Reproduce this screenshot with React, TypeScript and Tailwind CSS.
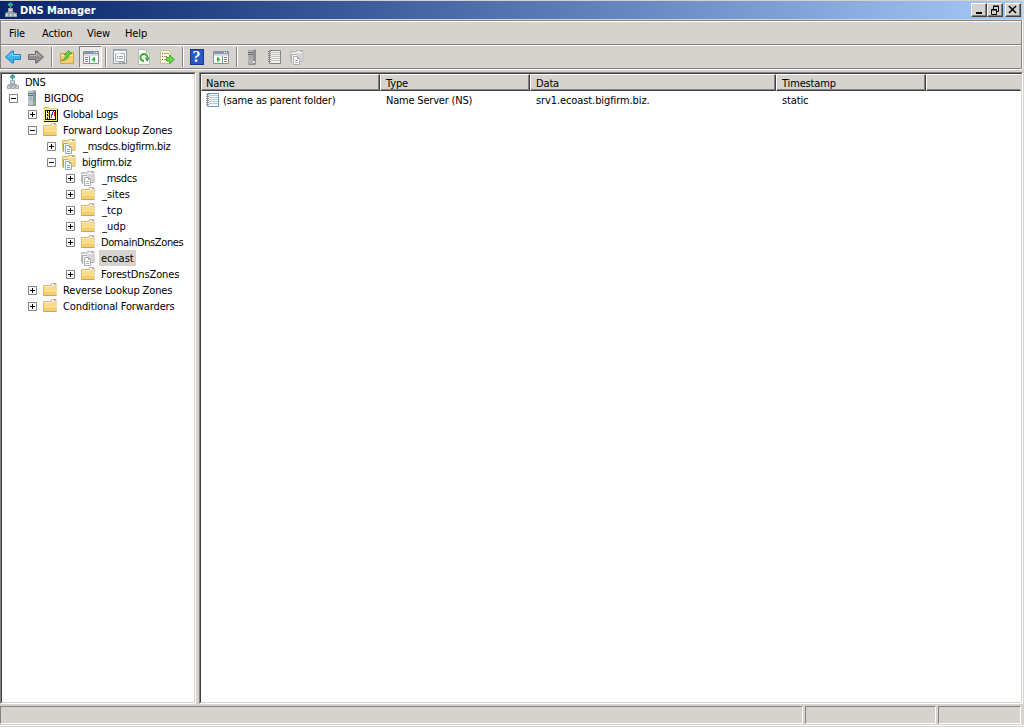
import type { ReactNode } from 'react';

type IconProps = { className?: string };

function Svg({ children, className = '' }: { children: ReactNode; className?: string }) {
  return (
    <svg viewBox="0 0 16 16" className={`size-4 shrink-0 ${className}`} fill="none">
      {children}
    </svg>
  );
}

function DnsIcon({ className }: IconProps) {
  return (
    <Svg className={className}>
      <path d="M8.500 5v6M4.500 12v-1.500h8V12" stroke="#9aa3a8" />
      <path d="M8.500 0l3 2.500-3 3-3-3z" fill="#2a86c4" />
      <path d="M6 2.500L8.500.5V3L7 4zM9 4.500L11 3 9.500 2z" fill="#4fc35a" />
      <path d="M6.500 6.500h4v3h-4z" fill="#f0f2f3" stroke="#9fa7ad" />
      <path d="M3.500 11.500h3v3h-3zM7.500 11.500h3v3h-3zM11.500 11.500h3v3h-3z" fill="#e8eaec" stroke="#9fa7ad" />
      <path d="M7 8h3M4 13h2M8 13h2M12 13h2" stroke="#aab2b8" />
    </Svg>
  );
}

function ServerIcon({ gray }: { gray?: boolean }) {
  return (
    <Svg>
      <path d="M5 1l1-1h6l1 1v14l-1 1H6l-1-1z" fill={gray ? '#8f8f8f' : '#8896a0'} />
      <path d="M5 1l1-1h6l-1 1z" fill={gray ? '#cfcfcf' : '#d5dee3'} />
      <path d="M5 1h5v14H6l-1-1z" fill={gray ? '#b2b2b2' : '#b9c6ce'} />
      <path d="M5 3h5v1H5zM5 5h5v1H5z" fill={gray ? '#6c6c6c' : '#5e7280'} />
      <path d="M6 7.500h3M6 9.500h3" stroke={gray ? '#9c9c9c' : '#98a8b2'} />
      <path d="M10 12h2v2h-2z" fill={gray ? '#e0e0e0' : '#69d957'} />
    </Svg>
  );
}

function LogsIcon() {
  return (
    <Svg>
      <path d="M1.500 14V2.500l1-1h4l1 1.500h7" fill="#ffef83" stroke="#c9bb55" />
      <path d="M1 3h14v12H1z" fill="#fff07c" />
      <path d="M15.500 3v12.500H2" stroke="#111" />
      <path d="M3 4h11v10H3z" fill="#111" />
      <path d="M4 5h9v8H4z" fill="#fff" />
      <path d="M5 5h1v2H5zM5 8h1v2H5zM5 11h1v2H5zM7 5h1v8H7z" fill="#111" />
      <path d="M6 6h1v2H6zM6 9h1v2H6z" fill="#f0d000" />
      <path d="M9 8h1v4H9zM12 6h1v4h-1z" fill="#e02020" />
      <path d="M10 6h1v3h-1zM11 5h1v1h-1z" fill="#2030d0" />
    </Svg>
  );
}

function FolderIcon() {
  return (
    <Svg>
      <path d="M1.500 3.500h7l1-2h4.500v12h-12.500z" fill="#f7d77f" stroke="#dfb864" />
      <path d="M2 5h12v8H2z" fill="#fbdc8b" />
      <path d="M2 4.500h7l1-1h4" stroke="#fff0b8" />
      <path d="M2 10h12v3H2z" fill="#f5ce72" />
      <path d="M10 2.500h2" stroke="#fff" />
      <path d="M12 2h1.500v1H12z" fill="#5da4cf" />
      <path d="M1 13.500h13.500" stroke="#cfa451" />
    </Svg>
  );
}

function ZoneIcon({ gray }: { gray?: boolean }) {
  const edge = gray ? '#bababa' : '#dfb864';
  const fill = gray ? '#d6d6d6' : '#f9d982';
  const ink = gray ? '#adadad' : '#86a9cd';
  return (
    <Svg>
      <path d="M1.500 2.500h5l1-1h6.500v11h-12.500z" fill={fill} stroke={edge} />
      <path d="M2 4.500h5l1-1h6" stroke={gray ? '#f2f2f2' : '#fff1bd'} />
      <path d="M9 2.500h2" stroke="#fff" />
      <path d="M11 2h2v1h-2z" fill={gray ? '#aaa' : '#65a9ce'} />
      <path d="M2 6h5v8H2z" fill="#eef2f5" />
      <path d="M2.500 14V5.500H7" stroke={ink} />
      <path d="M4.500 7.500h4l2 2v6h-6z" fill="#fff" stroke={ink} />
      <path d="M8 8h1v1h1v1H8z" fill={ink} />
      <path d="M6 11.500h3M6 13.500h3" stroke={ink} />
    </Svg>
  );
}

function NotebookIcon({ gray }: { gray?: boolean }) {
  return (
    <Svg>
      <path d="M2.500 1.500h11v13h-11z" fill={gray ? '#f0f0ee' : '#f3fbff'} stroke={gray ? '#858585' : '#7b96b6'} />
      <path d="M4 3.500h9M4 5.500h9M4 7.500h9M4 9.500h9M4 11.500h9" stroke={gray ? '#c2c2c2' : '#9dd5ec'} />
      <path d="M1 2.500h3M1 4.500h3M1 6.500h3M1 8.500h3M1 10.500h3M1 12.500h3" stroke={gray ? '#8a8a8a' : '#8793a2'} />
    </Svg>
  );
}

function ArrowIcon({ right }: { right?: boolean }) {
  return right ? (
    <Svg>
      <path d="M.5 5.500h7v-3.500h1.500L15.500 8 9 14H7.500v-3.500h-7z" fill="#8f8f8f" stroke="#6b6b6b" />
      <path d="M1.500 6.500h7V4l4 4" stroke="#b9b9b9" />
    </Svg>
  ) : (
    <Svg>
      <path d="M15.500 5.500h-7v-3.500H7L.5 8 7 14h1.500v-3.500h7z" fill="#38b4f4" stroke="#2a80bd" />
      <path d="M14.500 6.500h-7V4l-4 4" stroke="#8fdcfb" />
    </Svg>
  );
}

function UpFolderIcon() {
  return (
    <Svg>
      <path d="M1.500 4.500h6l1 1 2-2h4v11h-13z" fill="#f4ce70" stroke="#cfa451" />
      <path d="M2 6.500h12" stroke="#ffedb0" />
      <path d="M2 11.500c3-.5 4.500-2 5-6L5 6l4.500-4.500L13 5l-2.500-.2C10 9.500 7 11.500 2 11.500z" fill="#65cf38" stroke="#389a22" strokeWidth=".7" />
    </Svg>
  );
}

function PaneIcon({ play }: { play?: boolean }) {
  return (
    <Svg>
      <path d="M.5 2.500h15v12H.5z" fill="#fff" stroke="#8594a4" />
      <path d="M1 3h14v2H1z" fill="#8796aa" />
      <path d="M11 3.500h1M13 3.500h1" stroke="#fff" />
      <path d="M1 6h14" stroke="#d5dce4" strokeWidth="2" />
      {play ? (
        <>
          <path d="M9.500 7v7" stroke="#8796aa" />
          <path d="M11 8.500h3M11 10.500h3M11 12.500h3" stroke="#4e8dd5" />
          <path d="M4 7.500v6l3.500-3z" fill="#32b92d" />
        </>
      ) : (
        <>
          <path d="M6.500 7v7" stroke="#8796aa" />
          <path d="M2 8.500h3M2 10.500h3M2 12.500h3" stroke="#4e8dd5" />
          <path d="M12 7.500v6l-3.500-3z" fill="#32b92d" />
        </>
      )}
    </Svg>
  );
}

function PropertiesIcon() {
  return (
    <Svg>
      <path d="M1.500.5h13v14h-13z" fill="#f8f8f8" stroke="#929ba2" />
      <path d="M2 1.500h12" stroke="#aeb5bc" />
      <path d="M3.500 4.500h9v8h-9z" fill="#fff" stroke="#a3adb6" />
      <path d="M4 4.500h5" stroke="#d7dce0" />
      <path d="M5 7.500h1M5 9.500h1" stroke="#579cc9" />
      <path d="M7 7.500h4M7 9.500h4M7 13.500h2M10 13.500h3" stroke="#98a0a8" />
    </Svg>
  );
}

function RefreshIcon() {
  return (
    <Svg>
      <path d="M2.500.5h8l3 3v12h-11z" fill="#fafafa" stroke="#b8b8b8" />
      <path d="M10.500 1v3h3" stroke="#b8b8b8" />
      <path d="M8 12A3.500 3.500 0 1 1 11.500 8.500" stroke="#3fae33" strokeWidth="2" />
      <path d="M8.500 8.500h5L11.500 13z" fill="#35a52c" />
    </Svg>
  );
}

function ExportIcon() {
  return (
    <Svg>
      <path d="M1.500 1.500h8l2 2v11h-10z" fill="#fff9dd" stroke="#c4bda2" />
      <path d="M3 4.500h1M3 7.500h1M3 10.500h1" stroke="#5f5f5f" />
      <path d="M5 4.500h5M5 7.500h3M5 10.500h2" stroke="#a7997b" />
      <path d="M7.500 8.500h3V6l5 4.500-5 4.500v-3h-3z" fill="#70d34c" stroke="#45ac35" />
    </Svg>
  );
}

function HelpIcon() {
  return (
    <span className="flex h-4 w-3.5 items-center justify-center border border-[#16388b] bg-[#2858c4] font-['Liberation_Serif',serif] text-[16px] leading-none font-bold text-white">
      ?
    </span>
  );
}

function Separator() {
  return <span className="h-5 w-0.5 shrink-0 border-r border-l border-r-white border-l-[#848284]" />;
}

function ToolButton({ children, pressed }: { children: ReactNode; pressed?: boolean }) {
  return (
    <span
      className={`flex h-[22px] w-[23px] shrink-0 items-center justify-center ${
        pressed ? 'border border-t-[#808080] border-r-white border-b-white border-l-[#808080] bg-[#ebe9e5]' : ''
      }`}
    >
      {children}
    </span>
  );
}

const BUTTON = 'flex h-[14px] w-4 items-center justify-center border border-t-white border-r-[#404040] border-b-[#404040] border-l-white bg-[#d6d3ce] shadow-[inset_-1px_-1px_#808080]';

function TitleBar() {
  return (
    <header className="mt-px mr-0.5 flex h-[18px] items-center bg-linear-to-r from-[#0a246a] to-[#a6caf7]">
      <DnsIcon className="ml-0.5" />
      <h1 className="ml-0.5 flex-1 pt-0.5 font-['DejaVu_Sans_Condensed','DejaVu_Sans',sans-serif] text-[11px] font-bold tracking-[-0.04px] text-white">DNS Manager</h1>
      <div className="mr-px flex">
        <button className={BUTTON}>
          <svg className="h-3 w-3 shrink-0" viewBox="0 0 12 12"><path d="M3 8h6v2H3z" fill="#000" /></svg>
        </button>
        <button className={BUTTON}>
          <svg className="h-3 w-3 shrink-0" viewBox="0 0 12 12" fill="none"><path d="M4.500 5V2.500h5v5H8M4 2h6M2.500 5.500h5v5h-5zM2 6h6" stroke="#000" /></svg>
        </button>
        <button className={`${BUTTON} ml-0.5`}>
          <svg className="h-3 w-3 shrink-0" viewBox="0 0 12 12"><path d="M2 2l7 7M9 2l-7 7" stroke="#000" strokeWidth="1.600" /></svg>
        </button>
      </div>
    </header>
  );
}

type Node = { label: string; level: number; state?: '+' | '-'; icon: ReactNode; tracking: string; selected?: boolean };

const NODES: Node[] = [
  { label: 'DNS', level: 0, icon: <DnsIcon />, tracking: 'tracking-[-0.3px]' },
  { label: 'BIGDOG', level: 1, state: '-', icon: <ServerIcon />, tracking: 'tracking-[-0.15px]' },
  { label: 'Global Logs', level: 2, state: '+', icon: <LogsIcon />, tracking: 'tracking-[-0.24px]' },
  { label: 'Forward Lookup Zones', level: 2, state: '-', icon: <FolderIcon />, tracking: 'tracking-[-0.12px]' },
  { label: '_msdcs.bigfirm.biz', level: 3, state: '+', icon: <ZoneIcon />, tracking: 'tracking-[-0.27px]' },
  { label: 'bigfirm.biz', level: 3, state: '-', icon: <ZoneIcon />, tracking: 'tracking-[-0.28px]' },
  { label: '_msdcs', level: 4, state: '+', icon: <ZoneIcon gray />, tracking: 'tracking-[-0.3px]' },
  { label: '_sites', level: 4, state: '+', icon: <FolderIcon />, tracking: 'tracking-normal' },
  { label: '_tcp', level: 4, state: '+', icon: <FolderIcon />, tracking: 'tracking-normal' },
  { label: '_udp', level: 4, state: '+', icon: <FolderIcon />, tracking: 'tracking-normal' },
  { label: 'DomainDnsZones', level: 4, state: '+', icon: <FolderIcon />, tracking: 'tracking-[-0.4px]' },
  { label: 'ecoast', level: 4, icon: <ZoneIcon gray />, tracking: 'tracking-normal', selected: true },
  { label: 'ForestDnsZones', level: 4, state: '+', icon: <FolderIcon />, tracking: 'tracking-[-0.1px]' },
  { label: 'Reverse Lookup Zones', level: 2, state: '+', icon: <FolderIcon />, tracking: 'tracking-[-0.12px]' },
  { label: 'Conditional Forwarders', level: 2, state: '+', icon: <FolderIcon />, tracking: 'tracking-[-0.12px]' },
];

const INDENT = ['w-0', 'w-0', 'w-[19px]', 'w-[38px]', 'w-[57px]'];

function Expander({ state }: { state?: '+' | '-' }) {
  return (
    <span className="mr-[5px] ml-[7px] flex w-[9px] shrink-0">
      {state && (
        <svg viewBox="0 0 9 9" className="h-[9px] w-[9px] shrink-0" fill="none">
          <path d="M.5.5h8v8h-8z" fill="#fff" stroke="#848284" />
          <path d={state === '+' ? 'M2 4.500h5M4.500 2v5' : 'M2 4.500h5'} stroke="#000" />
        </svg>
      )}
    </span>
  );
}

function Tree() {
  return (
    <nav className="w-[196px] border border-t-[#848284] border-r-white border-b-white border-l-[#848284]">
      <ul className="h-full border border-t-[#404040] border-r-[#d6d3ce] border-b-[#d6d3ce] border-l-[#404040] bg-white">
        {NODES.map((n) => (
          <li key={n.label} className="flex h-4 items-center">
            <span className={`shrink-0 ${INDENT[n.level]}`} />
            {n.level === 0 ? <span className="w-0.5 shrink-0" /> : <Expander state={n.state} />}
            {n.icon}
            <span
              className={`flex h-4 items-center px-0.5 pt-0.5 whitespace-pre ${n.tracking} ${
                n.selected ? 'bg-[#d6d3ce]' : ''
              } ${n.label.startsWith('_') ? 'ml-1' : 'ml-[3px]'}`}
            >
              {n.label}
            </span>
          </li>
        ))}
      </ul>
    </nav>
  );
}

const COLS = 'grid grid-cols-[179px_150px_246px_150px_1fr]';

function Records() {
  return (
    <main className="ml-[3px] min-w-0 flex-1 border border-t-[#848284] border-r-white border-b-white border-l-[#848284]">
      <div className="h-full border border-t-[#404040] border-r-[#d6d3ce] border-b-[#d6d3ce] border-l-[#404040] bg-white">
        <div className={`${COLS} h-[17px] leading-[13px]`}>
          {['Name', 'Type', 'Data', 'Timestamp', ''].map((h, i) => (
            <div
              key={i}
              className={`flex h-[17px] items-center border border-t-white border-b-[#404040] border-l-white bg-[#d6d3ce] pt-0.5 tracking-[-0.15px] ${
                i === 0 ? 'pl-1' : 'pl-[5px]'
              } ${
                i < 4 ? 'border-r-[#404040] shadow-[inset_-1px_-1px_#848284]' : 'border-r-[#d6d3ce] shadow-[inset_0_-1px_#848284]'
              }`}
            >
              {h}
            </div>
          ))}
        </div>
        <div className={`${COLS} h-[18px] items-center`}>
          <span className="flex items-center pl-1 whitespace-pre">
            <NotebookIcon />
            <span className="ml-0.5 pt-0.5 tracking-[-0.18px]">(same as parent folder)</span>
          </span>
          <span className="pt-0.5 pl-1.5 tracking-[-0.2px]">Name Server (NS)</span>
          <span className="pt-0.5 pl-1.5 tracking-[-0.1px]">srv1.ecoast.bigfirm.biz.</span>
          <span className="pt-0.5 pl-1.5 tracking-[-0.15px]">static</span>
        </div>
      </div>
    </main>
  );
}

const CELL = 'border border-t-[#848284] border-r-white border-b-white border-l-[#848284]';

export default function App() {
  return (
    <div className="flex h-[727px] w-[1024px] flex-col overflow-hidden bg-[#d6d3ce] font-['DejaVu_Sans_Condensed','DejaVu_Sans',sans-serif] text-[11px] leading-4 text-black">
      <TitleBar />
      <section className="mt-px mr-0.5 h-[49px] border border-[#848284] shadow-[0_1px_#fff,1px_0_#fff]">
        <div className="flex h-6 items-center border-t border-b border-t-white border-b-[#848284] pt-0.5 pl-2 tracking-[-0.1px]">
          <span className="w-[33px]">File</span>
          <span className="w-[45px]">Action</span>
          <span className="w-[38px]">View</span>
          <span>Help</span>
        </div>
        <div className="flex h-[23px] items-center border-t border-t-white">
          <ToolButton><ArrowIcon /></ToolButton>
          <ToolButton><ArrowIcon right /></ToolButton>
          <span className="w-1" />
          <Separator />
          <span className="w-0.5" />
          <ToolButton><UpFolderIcon /></ToolButton>
          <span className="w-px" />
          <ToolButton pressed><PaneIcon /></ToolButton>
          <span className="w-[3px]" />
          <Separator />
          <span className="w-px" />
          <ToolButton><PropertiesIcon /></ToolButton>
          <span className="w-px" />
          <ToolButton><RefreshIcon /></ToolButton>
          <ToolButton><ExportIcon /></ToolButton>
          <span className="w-1" />
          <Separator />
          <span className="w-px" />
          <ToolButton><HelpIcon /></ToolButton>
          <span className="w-px" />
          <ToolButton><PaneIcon play /></ToolButton>
          <span className="w-1" />
          <Separator />
          <span className="w-px" />
          <ToolButton><ServerIcon gray /></ToolButton>
          <span className="w-px" />
          <ToolButton><NotebookIcon gray /></ToolButton>
          <span className="-ml-px w-0" />
          <ToolButton><ZoneIcon gray /></ToolButton>
        </div>
      </section>
      <div className="mt-[3px] mr-px flex h-[632px]">
        <Tree />
        <Records />
      </div>
      <footer className="mt-[2px] flex h-[18px] gap-0.5 pr-[3px]">
        <div className={`${CELL} w-[803px]`} />
        <div className={`${CELL} w-[131px]`} />
        <div className={`${CELL} flex-1`} />
      </footer>
      <div className="mt-px h-px bg-white" />
    </div>
  );
}
